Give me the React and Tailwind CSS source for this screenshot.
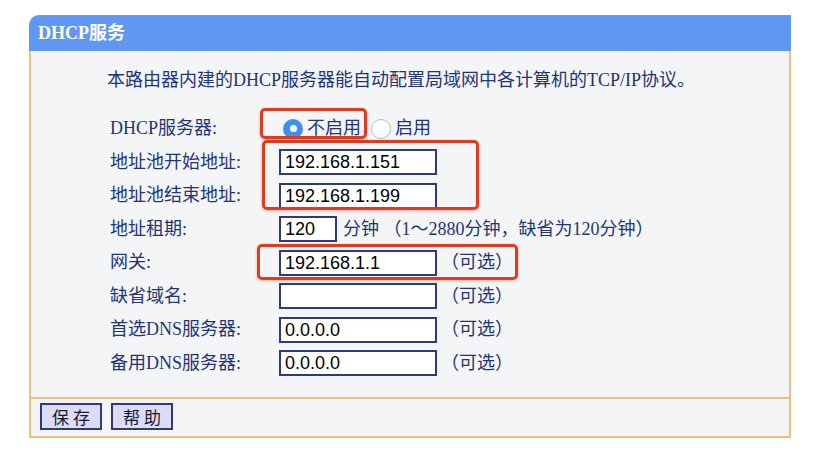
import React from "react";

const serif = { fontFamily: '"Liberation Serif", "Noto Sans CJK SC", serif' };

function Field({ value, w = "w-[158px]" }) {
  return (
    <div
      className={`${w} h-[26px] bg-white border-2 border-[#2d3a80] flex items-center pl-[4px] text-[18px] text-black leading-none`}
      style={{ fontFamily: '"Liberation Sans", Arial, sans-serif' }}
    >
      {value}
    </div>
  );
}

function Row({ label, children }) {
  return (
    <div className="h-[33.5px] flex items-center">
      <div className="w-[169px] text-[18px] text-[#22347a]">{label}</div>
      <div className="flex items-center">{children}</div>
    </div>
  );
}

const Opt = () => <span className="ml-[4px] text-[18px] text-[#22347a]">（可选）</span>;

export default function App() {
  return (
    <div className="relative w-[823px] h-[475px] bg-white overflow-hidden" style={serif}>
      <div className="ml-[29px] mt-[15px] w-[762px]">
        <div className="h-[36px] bg-[#6197f4] rounded-tl-[10px] flex items-center pl-[9px] text-white text-[18px] font-bold">
          DHCP服务
        </div>
        <div className="bg-[#f4f5f6] border-l-2 border-r-2 border-b-2 border-[#ebc07e]">
          <div className="pt-[17px] pl-[76px] h-[41px] leading-[24px] text-[18px] text-[#22347a]">
            本路由器内建的DHCP服务器能自动配置局域网中各计算机的TCP/IP协议。
          </div>
          <div className="pt-[20px] pb-[17px] pl-[79px]">
            <Row label="DHCP服务器:">
              <div className="flex items-center ml-[4px]">
                <span className="w-[20px] h-[20px] rounded-full bg-[#3d8ff2] flex items-center justify-center">
                  <span className="w-[7px] h-[7px] rounded-full bg-white" />
                </span>
                <span className="ml-[4px] text-[18px] text-[#22347a]">不启用</span>
                <span className="ml-[10px] w-[20px] h-[20px] rounded-full bg-white border border-[#b9bcc4]" />
                <span className="ml-[4px] text-[18px] text-[#22347a]">启用</span>
              </div>
            </Row>
            <Row label="地址池开始地址:">
              <Field value="192.168.1.151" />
            </Row>
            <Row label="地址池结束地址:">
              <Field value="192.168.1.199" />
            </Row>
            <Row label="地址租期:">
              <Field value="120" w="w-[58px]" />
              <span className="ml-[6px] text-[18px] text-[#22347a]">分钟 （1～2880分钟，缺省为120分钟）</span>
            </Row>
            <Row label="网关:">
              <Field value="192.168.1.1" />
              <Opt />
            </Row>
            <Row label="缺省域名:">
              <Field value="" />
              <Opt />
            </Row>
            <Row label="首选DNS服务器:">
              <Field value="0.0.0.0" />
              <Opt />
            </Row>
            <Row label="备用DNS服务器:">
              <Field value="0.0.0.0" />
              <Opt />
            </Row>
          </div>
          <div className="border-t-2 border-[#ebc07e] h-[39px] flex items-start pt-[4px] pl-[9px] gap-[9px]">
            <button
              className="w-[62px] h-[27px] bg-[#dcdcf6] border-2 border-[#2d3a80] text-[17px] text-[#1a1a2e] leading-none tracking-[4px] pl-[4px]"
              style={{ fontFamily: '"Noto Sans CJK SC", sans-serif' }}
            >
              保存
            </button>
            <button
              className="w-[62px] h-[27px] bg-[#dcdcf6] border-2 border-[#2d3a80] text-[17px] text-[#1a1a2e] leading-none tracking-[4px] pl-[4px]"
              style={{ fontFamily: '"Noto Sans CJK SC", sans-serif' }}
            >
              帮助
            </button>
          </div>
        </div>
      </div>

      <div className="absolute left-[260px] top-[108px] w-[107px] h-[31px] border-[3px] border-[#e03a20] rounded-[5px] shadow-[0_1px_3px_rgba(224,58,32,0.4)]" />
      <div className="absolute left-[262px] top-[140px] w-[217px] h-[70px] border-[3px] border-[#e03a20] rounded-[5px] shadow-[0_1px_3px_rgba(224,58,32,0.4)]" />
      <div className="absolute left-[257px] top-[244px] w-[261px] h-[36px] border-[3px] border-[#e03a20] rounded-[5px] shadow-[0_1px_3px_rgba(224,58,32,0.4)]" />
    </div>
  );
}
